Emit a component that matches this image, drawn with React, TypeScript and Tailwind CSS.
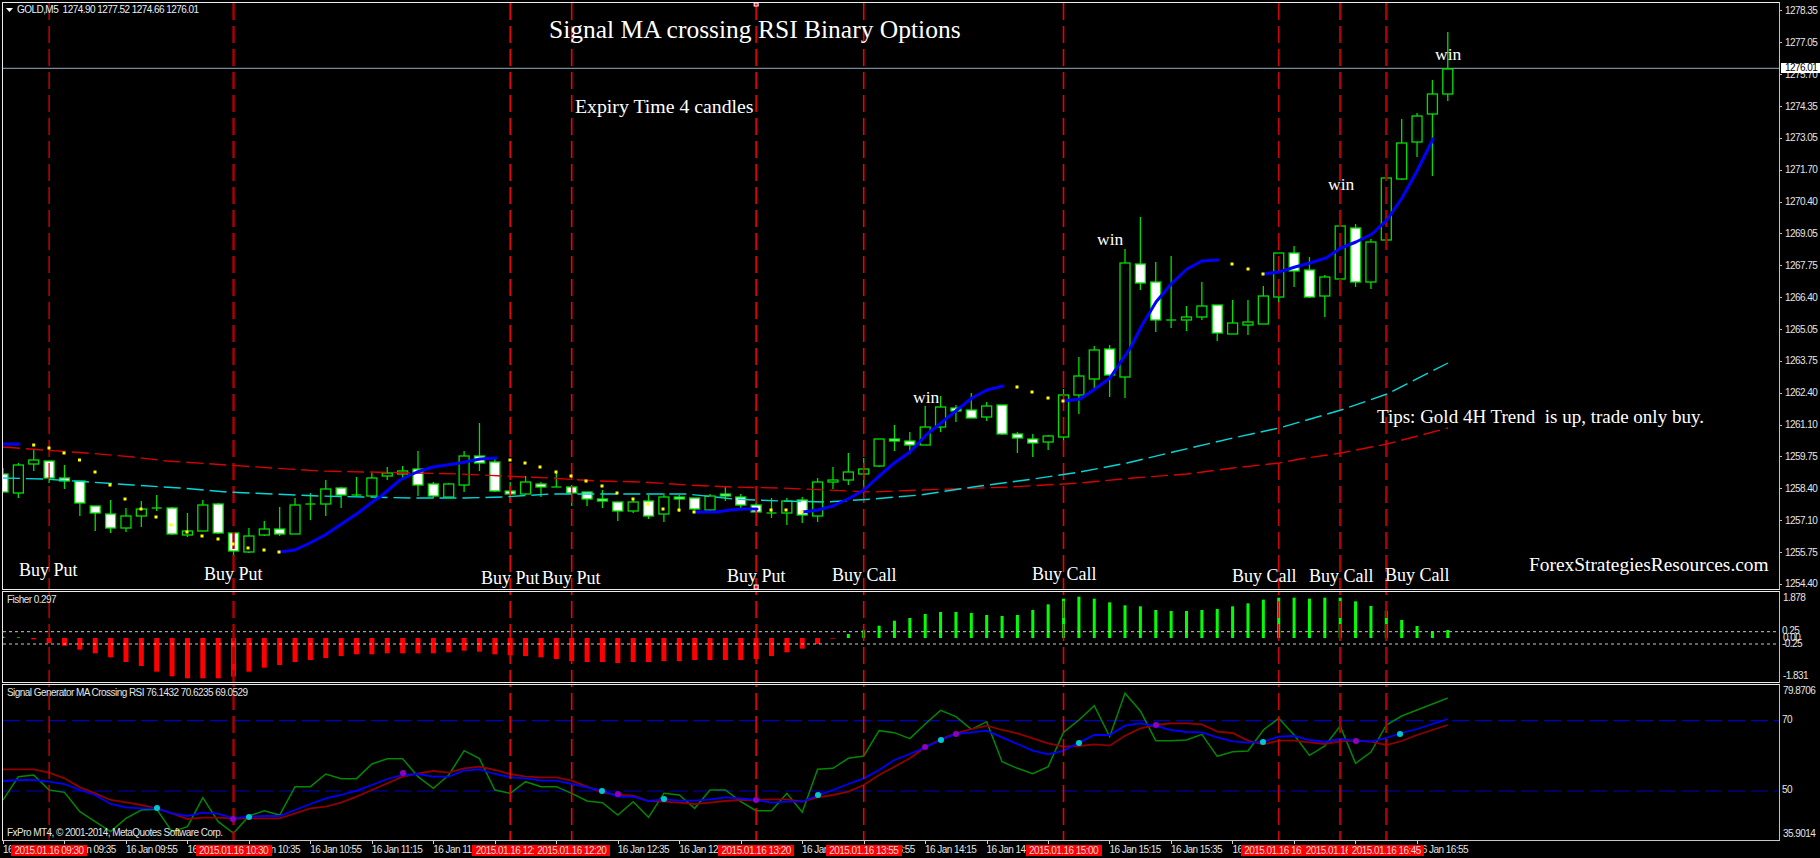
import React from 'react';

const STEP = 15.37;
const barX = (i: number) => 3 + STEP * i;
const zy = (v: number) => 500 + v / 3;

// bodyTop, bodyBottom, wickTop, wickBottom, white body
type Candle = [number, number, number, number, number];
const candles: Candle[] = [
  [474, 492, 468, 492, 1], [465, 493, 463, 498, 0], [460, 464, 450, 471, 0], [461, 478, 461, 483, 1],
  [478, 481, 465, 489, 1], [481, 503, 481, 516, 1], [506, 513, 506, 531, 1], [514, 528, 500, 533, 1],
  [516, 528, 508, 532, 0], [509, 516, 501, 527, 0], [508, 508, 495, 511, 0], [508, 534, 507, 535, 1],
  [531, 535, 513, 537, 0], [505, 531, 500, 531, 0], [504, 533, 503, 534, 1], [533, 551, 533, 557, 1],
  [536, 552, 528, 553, 0], [529, 535, 521, 536, 0], [529, 534, 507, 536, 1], [505, 534, 498, 534, 0],
  [504, 504, 493, 520, 0], [489, 504, 480, 516, 0], [488, 495, 487, 508, 1], [495, 495, 477, 496, 0],
  [478, 496, 473, 497, 0], [473, 476, 467, 480, 0], [471, 474, 466, 478, 0], [469, 485, 451, 496, 1],
  [484, 496, 482, 498, 1], [484, 497, 483, 497, 0], [456, 485, 451, 492, 0], [456, 463, 423, 471, 1],
  [462, 491, 457, 492, 1], [491, 494, 482, 503, 1], [482, 494, 476, 495, 0], [484, 487, 482, 497, 1],
  [487, 487, 471, 487, 0], [487, 493, 485, 506, 1], [492, 499, 492, 506, 1], [499, 501, 490, 508, 1],
  [502, 511, 502, 521, 1], [502, 511, 500, 513, 0], [501, 516, 495, 519, 1], [497, 514, 493, 522, 0],
  [497, 499, 495, 512, 1], [498, 509, 498, 510, 1], [496, 510, 494, 511, 0], [494, 496, 487, 501, 1],
  [497, 505, 494, 508, 1], [505, 512, 503, 513, 1], [513, 513, 498, 518, 0], [501, 513, 498, 525, 0],
  [500, 515, 497, 523, 1], [482, 516, 478, 522, 0], [480, 482, 467, 489, 0], [472, 480, 453, 485, 0],
  [469, 474, 458, 487, 0], [439, 466, 439, 467, 0], [439, 441, 425, 451, 1], [441, 445, 432, 454, 1],
  [427, 445, 406, 445, 0], [407, 427, 396, 432, 0], [408, 411, 405, 422, 1], [410, 418, 393, 418, 1],
  [406, 417, 402, 421, 0], [405, 434, 405, 435, 1], [434, 438, 432, 453, 1], [439, 443, 434, 457, 1],
  [436, 442, 435, 450, 0], [395, 437, 389, 441, 0], [376, 395, 357, 414, 0], [350, 379, 346, 389, 0],
  [349, 375, 345, 397, 1], [263, 377, 249, 398, 0], [264, 283, 217, 290, 1], [282, 320, 262, 332, 1],
  [320, 320, 256, 328, 0], [317, 320, 306, 331, 0], [306, 317, 282, 320, 0], [305, 333, 305, 341, 1],
  [323, 334, 300, 334, 0], [322, 325, 300, 335, 0], [296, 324, 286, 324, 0], [253, 297, 253, 303, 0],
  [253, 271, 246, 287, 1], [270, 297, 257, 298, 1], [277, 296, 275, 317, 0], [226, 279, 226, 288, 0],
  [228, 282, 224, 287, 1], [242, 282, 239, 289, 0], [178, 240, 178, 240, 0], [143, 179, 119, 180, 0],
  [116, 142, 113, 157, 0], [94, 114, 80, 176, 0], [69, 94, 32, 101, 0],
];

const maSegments: number[][][] = [
  [[3, 444], [19, 444]],
  [[279, 552], [295, 550], [310, 543], [325, 535], [343, 523], [358, 513], [375, 500], [380, 497], [400, 480], [417, 472], [433, 467], [460, 463], [480, 459], [496, 458]],
  [[695, 512], [717, 512], [730, 510], [743, 509], [757, 509]],
  [[803, 512], [818, 510], [833, 506], [850, 498], [864, 490], [877, 478], [893, 464], [910, 452], [926, 435], [941, 423], [957, 410], [972, 398], [987, 390], [1003, 386]],
  [[1064, 401], [1080, 399], [1095, 389], [1110, 378], [1120, 363], [1131, 347], [1141, 327], [1156, 302], [1172, 283], [1187, 269], [1202, 261], [1218, 260]],
  [[1263, 274], [1279, 272], [1295, 267], [1310, 263], [1326, 258], [1341, 248], [1356, 242], [1372, 234], [1387, 220], [1402, 198], [1417, 171], [1433, 139]],
];

const yellowDots = [
  [33.7, 445], [49, 448], [64, 453], [79.5, 460], [95, 472], [110, 485], [125, 499], [141, 509], [156, 517], [171, 525], [187, 532], [202, 536], [218, 539], [233, 544], [248, 548], [264, 550], [279, 552],
  [510, 460], [525, 463], [540, 467], [556, 472], [571, 476], [586, 481], [602, 486], [617, 493], [633, 499], [648, 504], [663, 509], [679, 510], [694, 512],
  [771, 510], [786, 510], [802, 512], [1017, 387], [1032, 392], [1048, 398], [1063, 401], [1232, 264], [1248, 269], [1263, 274],
];

const slowRed = [[3, 447], [43, 450], [87, 453], [133, 457], [167, 461], [227, 465], [273, 468], [320, 471], [367, 472], [460, 474], [503, 476], [550, 478], [597, 481], [642, 482], [687, 485], [733, 487], [780, 488], [827, 490], [873, 492], [920, 490], [1010, 487], [1080, 483], [1133, 478], [1187, 474], [1233, 468], [1279, 463], [1300, 459], [1341, 453], [1387, 444], [1448, 428]];
const slowCyan = [[3, 478], [43, 479], [89, 482], [133, 485], [180, 488], [227, 492], [273, 494], [320, 496], [367, 497], [412, 498], [464, 498], [503, 497], [550, 494], [597, 494], [642, 494], [687, 494], [733, 499], [780, 501], [827, 502], [873, 499], [920, 495], [973, 487], [1033, 479], [1080, 472], [1127, 463], [1173, 452], [1233, 438], [1279, 428], [1300, 422], [1341, 410], [1387, 394], [1448, 363]];

const verticals: [number, number, string][] = [
  [3, 1.3, '#e00000'], [15, 2.4, '#b00000'], [33, 1.6, '#f00000'], [37, 1.6, '#f00000'], [49, 1.6, '#f00000'],
  [56, 1.6, '#f00000'], [69, 1.6, '#f00000'], [83, 1.3, '#e00000'], [87, 2.4, '#b00000'], [90, 2.4, '#b00000'],
];

const fisher = [
  410, 412, 418, 429, 437, 449, 460, 472, 486, 498, 515, 529, 535, 535, 535, 530, 515, 503, 495, 486, 480, 474, 468, 463, 463, 460, 460, 460, 460, 457,
  452, 455, 463, 466, 468, 472, 477, 483, 486, 486, 489, 486, 486, 483, 483, 480, 480, 480, 480, 477, 468, 457, 446, 432, 416,
  402, 391, 377, 362, 354, 342, 336, 336, 339, 345, 348, 345, 330, 313, 296, 290, 296, 307, 316, 319, 330, 333, 333, 330, 327, 319, 310, 299, 293, 293, 296, 293, 293, 304, 318, 333, 360, 378, 396, 390,
];

const rsiGreen = [
  900, 830, 825, 870, 877, 935, 965, 995, 955, 930, 928, 995, 980, 893, 965, 1000, 948, 932, 945, 860, 860, 822, 836, 836, 792, 776, 776, 830, 865, 825,
  752, 776, 870, 880, 845, 860, 860, 880, 903, 908, 945, 905, 952, 880, 885, 925, 870, 870, 905, 932, 932, 880, 937, 808, 805, 775, 768, 692, 698, 716,
  672, 631, 650, 688, 665, 785, 805, 821, 800, 697, 660, 617, 710, 580, 633, 722, 722, 720, 703, 769, 755, 753, 690, 655, 705, 766, 738, 678, 790, 756, 675, 648, 630, 612, 594,
];
const rsiBlue = [
  843, 840, 840, 845, 852, 870, 885, 912, 922, 925, 925, 940, 948, 938, 941, 955, 950, 948, 948, 930, 912, 895, 885, 872, 855, 837, 825, 822, 830, 830,
  812, 808, 822, 832, 835, 842, 842, 852, 862, 872, 890, 890, 903, 898, 902, 902, 898, 892, 895, 900, 908, 905, 905, 886, 870, 852, 835, 810, 780, 762,
  742, 720, 702, 697, 692, 712, 732, 752, 763, 752, 728, 705, 705, 677, 670, 678, 690, 696, 697, 712, 724, 728, 725, 710, 708, 720, 726, 717, 722, 725, 714, 699, 687, 672, 657,
];
const rsiRed = [
  808, 808, 808, 818, 835, 862, 880, 900, 907, 915, 925, 940, 957, 953, 953, 956, 955, 955, 955, 940, 925, 920, 908, 890, 870, 850, 830, 820, 813, 818,
  805, 800, 810, 822, 830, 832, 832, 842, 860, 878, 885, 887, 903, 905, 908, 912, 908, 903, 900, 900, 898, 898, 905, 892, 885, 875, 855, 825, 800, 775,
  742, 718, 700, 687, 677, 690, 700, 715, 730, 740, 738, 733, 737, 707, 685, 675, 670, 670, 673, 695, 699, 722, 733, 722, 722, 727, 732, 724, 722, 725, 735, 723, 705, 690, 675,
];
const cyanDots = [[157, 808], [249, 817], [602, 791], [664, 799], [818, 795], [941, 740], [1079, 743], [1263, 742], [1400, 734]];
const purpleDots = [[233, 819], [403, 773], [618, 794], [756, 800], [925, 747], [956, 734], [1156, 725], [1356, 741]];

const priceLabels = ['1278.35', '1277.05', '1275.70', '1274.35', '1273.05', '1271.70', '1270.40', '1269.05', '1267.75', '1266.40', '1265.05', '1263.75', '1262.40', '1261.10', '1259.75', '1258.40', '1257.10', '1255.75', '1254.40'];
const timeLabels = ['09:15', '09:35', '09:55', '10:15', '10:35', '10:55', '11:15', '11:35', '11:55', '12:15', '12:35', '12:55', '13:15', '13:35', '13:55', '14:15', '14:35', '14:55', '15:15', '15:35', '15:55', '16:15', '16:35', '16:55'];
const signalTimes: [number, string][] = [[3, '09:30'], [15, '10:30'], [33, '12:00'], [37, '12:20'], [49, '13:20'], [56, '13:55'], [69, '15:00'], [83, '16:10'], [87, '16:30'], [90, '16:45']];

const notes: { text: string; x: number; y: number; cls: string }[] = [
  { text: 'Signal MA crossing RSI Binary Options', x: 549, y: 30, cls: 'text-[25.5px]' },
  { text: 'Expiry Time 4 candles', x: 575, y: 107, cls: 'text-[19.8px]' },
  { text: 'win', x: 1435, y: 55, cls: 'text-[17.5px]' },
  { text: 'win', x: 1328, y: 185, cls: 'text-[17.5px]' },
  { text: 'win', x: 1097, y: 240, cls: 'text-[17.5px]' },
  { text: 'win', x: 913, y: 398, cls: 'text-[17.5px]' },
  { text: 'Tips: Gold 4H Trend  is up, trade only buy.', x: 1377, y: 416, cls: 'text-[19px] whitespace-pre' },
  { text: 'ForexStrategiesResources.com', x: 1529, y: 565, cls: 'text-[19.4px]' },
  { text: 'Buy Put', x: 19, y: 570, cls: 'text-[18px]' },
  { text: 'Buy Put', x: 204, y: 574, cls: 'text-[18px]' },
  { text: 'Buy Put', x: 481, y: 578, cls: 'text-[18px]' },
  { text: 'Buy Put', x: 542, y: 578, cls: 'text-[18px]' },
  { text: 'Buy Put', x: 727, y: 576, cls: 'text-[18px]' },
  { text: 'Buy Call', x: 832, y: 575, cls: 'text-[18px]' },
  { text: 'Buy Call', x: 1032, y: 574, cls: 'text-[18px]' },
  { text: 'Buy Call', x: 1232, y: 576, cls: 'text-[18px]' },
  { text: 'Buy Call', x: 1309, y: 576, cls: 'text-[18px]' },
  { text: 'Buy Call', x: 1385, y: 575, cls: 'text-[18px]' },
];

const line = (pts: number[][]) => pts.map(p => p.join(',')).join(' ');
const series = (vals: number[]) => vals.map((v, i) => `${barX(i)},${zy(v)}`).join(' ');

function VerticalLines({ from, to }: { from: number; to: number }) {
  return (
    <>
      {verticals.map(([i, w, c]) => (
        <line key={i} x1={barX(i)} x2={barX(i)} y1={from} y2={to} stroke={c} strokeWidth={w} strokeDasharray="17 6" strokeDashoffset={(from - 3) % 23} />
      ))}
    </>
  );
}

function MainChart() {
  return (
    <svg className="block" width={1776} height={586} viewBox="3 3 1776 586">
      <line x1={3} x2={1779} y1={68.3} y2={68.3} stroke="#778899" strokeWidth={1.2} />
      {candles.map(([top, bottom, wTop, wBottom, white], i) => {
        const x = barX(i);
        return (
          <g key={i} stroke="#00e000" strokeWidth={1.3}>
            <line x1={x} x2={x} y1={wTop} y2={wBottom} />
            {top === bottom ? (
              <line x1={x - 5} x2={x + 5} y1={top} y2={top} />
            ) : (
              <rect x={x - 5} y={top} width={10} height={bottom - top} fill={white ? '#ffffff' : '#000000'} />
            )}
          </g>
        );
      })}
      <VerticalLines from={3} to={589} />
      <polyline points={line(slowRed)} fill="none" stroke="#d80000" strokeWidth={1.4} strokeDasharray="17 6" />
      <polyline points={line(slowCyan)} fill="none" stroke="#00d8d8" strokeWidth={1.4} strokeDasharray="17 6" />
      {maSegments.map((seg, i) => (
        <polyline key={i} points={line(seg)} fill="none" stroke="#0000ff" strokeWidth={3} strokeLinecap="round" strokeLinejoin="round" />
      ))}
      {yellowDots.map(([x, y], i) => (
        <rect key={i} x={x - 1.5} y={y - 1.5} width={3} height={3} fill="#ffff00" />
      ))}
      <rect x={barX(49) - 2} y={585} width={4} height={4} fill="#ff0000" stroke="#ffffff" strokeWidth={1} />
      <rect x={barX(49) - 2} y={3} width={4} height={3} fill="#ff0000" stroke="#ffffff" strokeWidth={1} />
    </svg>
  );
}

function FisherChart() {
  return (
    <svg className="block" width={1776} height={90} viewBox="3 592 1776 90">
      {fisher.map((v, i) => {
        const y = zy(v);
        const red = y > 638;
        const w = red ? 5 : 3;
        return <rect key={i} x={barX(i) - w / 2} y={red ? 638 : y} width={w} height={Math.abs(y - 638)} fill={red ? '#ff0000' : '#00ff00'} />;
      })}
      <line x1={3} x2={1779} y1={631.7} y2={631.7} stroke="#c8c8c8" strokeDasharray="3 3" />
      <line x1={3} x2={1779} y1={644} y2={644} stroke="#c8c8c8" strokeDasharray="3 3" />
      <VerticalLines from={592} to={682} />
    </svg>
  );
}

function RsiChart() {
  return (
    <svg className="block" width={1776} height={155} viewBox="3 685 1776 155">
      <line x1={3} x2={1779} y1={720.7} y2={720.7} stroke="#0000c0" strokeWidth={1.2} strokeDasharray="17 6" />
      <line x1={3} x2={1779} y1={791} y2={791} stroke="#0000c0" strokeWidth={1.2} strokeDasharray="17 6" />
      <polyline points={series(rsiGreen)} fill="none" stroke="#008800" strokeWidth={1.5} />
      <polyline points={series(rsiRed)} fill="none" stroke="#900000" strokeWidth={1.8} />
      <polyline points={series(rsiBlue)} fill="none" stroke="#0000ff" strokeWidth={1.8} />
      <VerticalLines from={685} to={840} />
      {cyanDots.map(([x, y], i) => (
        <circle key={i} cx={x} cy={y} r={3} fill="#00c8d0" />
      ))}
      {purpleDots.map(([x, y], i) => (
        <circle key={i} cx={x} cy={y} r={3} fill="#9000c0" />
      ))}
    </svg>
  );
}

export default function App() {
  return (
    <div className="w-[1820px] h-[858px] bg-black overflow-hidden flex flex-col gap-[1px] pt-[2px] pl-[2px] font-['Liberation_Sans',Arial,sans-serif] text-[10px] leading-[10px] tracking-[-0.55px] text-[#e4e4e4]">
      {/* price chart */}
      <div className="flex h-[588px] shrink-0">
        <div className="relative w-[1778px] shrink-0 border border-[#ececec] border-r-[#c0c0c0] box-border">
          <MainChart />
          <div className="absolute left-[3px] top-[2px] flex items-center gap-[4px]">
            <svg width="7" height="4" viewBox="0 0 7 4"><path d="M0 0h7L3.5 4z" fill="#ffffff" /></svg>
            <span className="whitespace-pre text-[#e8eef8]">GOLD,M5  1274.90 1277.52 1274.66 1276.01</span>
          </div>
          {notes.map((n, i) => (
            <span
              key={i}
              className={`absolute -translate-y-1/2 leading-none text-white tracking-normal whitespace-nowrap font-['Liberation_Serif',serif] ${n.cls}`}
              style={{ left: n.x - 3, top: n.y - 3 }}
            >
              {n.text}
            </span>
          ))}
        </div>
        <div className="relative flex-1 flex flex-col -mt-[7px]">
          {priceLabels.map(p => (
            <div key={p} className="h-[31.87px] shrink-0 flex items-center gap-[3px]">
              <span className="w-[2px] h-[1px] bg-[#c0c0c0]" />
              <span>{p}</span>
            </div>
          ))}
          <div className="absolute left-[1px] top-[68px] w-[39px] h-[10px] bg-white text-black pl-[4px]">1276.01</div>
        </div>
      </div>

      {/* fisher */}
      <div className="flex h-[92px] shrink-0">
        <div className="relative w-[1778px] shrink-0 border border-[#ececec] border-r-[#c0c0c0] box-border">
          <FisherChart />
          <span className="absolute left-[4px] top-[3px]">Fisher 0.297</span>
        </div>
        <div className="flex flex-col pl-[3px]">
          <span className="mt-[2px]">1.878</span>
          <span className="mt-[23px] -ml-[1px]">0.25</span>
          <span className="-mt-[3px]">0.00</span>
          <span className="-mt-[4px] -ml-[1px]">-0.25</span>
          <span className="mt-[22px]">-1.831</span>
        </div>
      </div>

      {/* rsi */}
      <div className="flex h-[157px] shrink-0">
        <div className="relative w-[1778px] shrink-0 border border-[#ececec] border-b-[#c8c8c8] border-r-[#c0c0c0] box-border">
          <RsiChart />
          <span className="absolute left-[4px] top-[3px]">Signal Generator MA Crossing RSI 76.1432 70.6235 69.0529</span>
          <span className="absolute left-[4px] bottom-[2px]">FxPro MT4, © 2001-2014, MetaQuotes Software Corp.</span>
        </div>
        <div className="flex flex-col pl-[3px]">
          <span className="mt-[2px]">79.8706</span>
          <span className="mt-[19px] -ml-[1px]">70</span>
          <span className="mt-[60px] -ml-[1px]">50</span>
          <span className="mt-[34px]">35.9014</span>
        </div>
      </div>

      {/* time scale */}
      <div className="relative flex-1 flex pl-[1px] -mt-[1px]">
        {timeLabels.map(t => (
          <div key={t} className="w-[61.48px] shrink-0 flex flex-col">
            <span className="w-[1px] h-[3px] bg-[#d0d0d0]" />
            <span className="mt-[1px] whitespace-nowrap">16 Jan {t}</span>
          </div>
        ))}
        {signalTimes.map(([i, t]) => (
          <span
            key={i}
            className="absolute top-[4px] w-[76px] h-[11px] bg-[#ff0000] text-[#f0d8d8] flex items-center justify-center whitespace-nowrap"
            style={{ left: barX(i) - 40 }}
          >
            2015.01.16 {t}
          </span>
        ))}
      </div>
    </div>
  );
}
